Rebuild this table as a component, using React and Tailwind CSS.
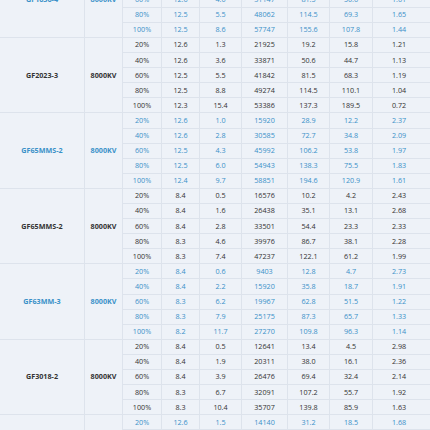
import React from 'react';

const groups = [
  {
    name: 'GF1636-4', kv: '8000KV', blue: true,
    rows: [
      ['20%', '12.6', '0.9', '14212', '27.4', '11.3', '2.42'],
      ['40%', '12.6', '2.3', '23108', '52.0', '29.0', '1.79'],
      ['60%', '12.6', '4.0', '31147', '81.5', '50.6', '1.61'],
      ['80%', '12.5', '5.5', '48062', '114.5', '69.3', '1.65'],
      ['100%', '12.5', '8.6', '57747', '155.6', '107.8', '1.44'],
    ],
  },
  {
    name: 'GF2023-3', kv: '8000KV', blue: false,
    rows: [
      ['20%', '12.6', '1.3', '21925', '19.2', '15.8', '1.21'],
      ['40%', '12.6', '3.6', '33871', '50.6', '44.7', '1.13'],
      ['60%', '12.5', '5.5', '41842', '81.5', '68.3', '1.19'],
      ['80%', '12.5', '8.8', '49274', '114.5', '110.1', '1.04'],
      ['100%', '12.3', '15.4', '53386', '137.3', '189.5', '0.72'],
    ],
  },
  {
    name: 'GF65MMS-2', kv: '8000KV', blue: true,
    rows: [
      ['20%', '12.6', '1.0', '15920', '28.9', '12.2', '2.37'],
      ['40%', '12.6', '2.8', '30585', '72.7', '34.8', '2.09'],
      ['60%', '12.5', '4.3', '45992', '106.2', '53.8', '1.97'],
      ['80%', '12.5', '6.0', '54943', '138.3', '75.5', '1.83'],
      ['100%', '12.4', '9.7', '58851', '194.6', '120.9', '1.61'],
    ],
  },
  {
    name: 'GF65MMS-2', kv: '8000KV', blue: false,
    rows: [
      ['20%', '8.4', '0.5', '16576', '10.2', '4.2', '2.43'],
      ['40%', '8.4', '1.6', '26438', '35.1', '13.1', '2.68'],
      ['60%', '8.4', '2.8', '33501', '54.4', '23.3', '2.33'],
      ['80%', '8.3', '4.6', '39976', '86.7', '38.1', '2.28'],
      ['100%', '8.3', '7.4', '47237', '122.1', '61.2', '1.99'],
    ],
  },
  {
    name: 'GF63MM-3', kv: '8000KV', blue: true,
    rows: [
      ['20%', '8.4', '0.6', '9403', '12.8', '4.7', '2.73'],
      ['40%', '8.4', '2.2', '15920', '35.8', '18.7', '1.91'],
      ['60%', '8.3', '6.2', '19967', '62.8', '51.5', '1.22'],
      ['80%', '8.3', '7.9', '25175', '87.3', '65.7', '1.33'],
      ['100%', '8.2', '11.7', '27270', '109.8', '96.3', '1.14'],
    ],
  },
  {
    name: 'GF3018-2', kv: '8000KV', blue: false,
    rows: [
      ['20%', '8.4', '0.5', '12641', '13.4', '4.5', '2.98'],
      ['40%', '8.4', '1.9', '20311', '38.0', '16.1', '2.36'],
      ['60%', '8.4', '3.9', '26476', '69.4', '32.4', '2.14'],
      ['80%', '8.3', '6.7', '32091', '107.2', '55.7', '1.92'],
      ['100%', '8.3', '10.4', '35707', '139.8', '85.9', '1.63'],
    ],
  },
  {
    name: 'GF3020-3', kv: '8000KV', blue: true,
    rows: [
      ['20%', '12.6', '1.5', '14140', '31.2', '18.5', '1.68'],
      ['40%', '12.6', '3.4', '24318', '70.1', '42.6', '1.65'],
      ['60%', '12.5', '5.8', '33512', '109.4', '72.5', '1.51'],
      ['80%', '12.5', '8.1', '41206', '143.9', '101.3', '1.42'],
      ['100%', '12.4', '11.6', '48730', '182.0', '144.1', '1.26'],
    ],
  },
];

function Group({ group }) {
  const tone = group.blue ? 'text-[#3a91c8]' : 'text-[#333]';
  return (
    <div className="grid grid-cols-[85px_38px_39px_38px_42px_46px_42px_43px_1fr] grid-rows-[repeat(5,15.1px)]">
      <div className={`row-span-5 flex items-center justify-center border-b border-r border-[#dde3ec] font-bold ${tone}`}>
        {group.name}
      </div>
      <div className={`row-span-5 flex items-center justify-center border-b border-r border-[#dde3ec] font-bold ${tone}`}>
        {group.kv}
      </div>
      {group.rows.map((row, i) =>
        row.map((cell, j) => (
          <div
            key={`${i}-${j}`}
            className={`flex items-center justify-center border-b border-[#dde3ec] ${j < 6 ? 'border-r' : 'pr-[5px]'} ${tone}`}
          >
            {cell}
          </div>
        ))
      )}
    </div>
  );
}

export default function App() {
  return (
    <div className="h-[430px] w-[430px] overflow-hidden bg-[#eef2f8] text-[7.2px] leading-none" style={{ fontFamily: '"Open Sans", "Noto Sans", sans-serif' }}>
      <div className="-mt-[37.5px]">
        {groups.map((g, i) => (
          <Group key={i} group={g} />
        ))}
      </div>
    </div>
  );
}
